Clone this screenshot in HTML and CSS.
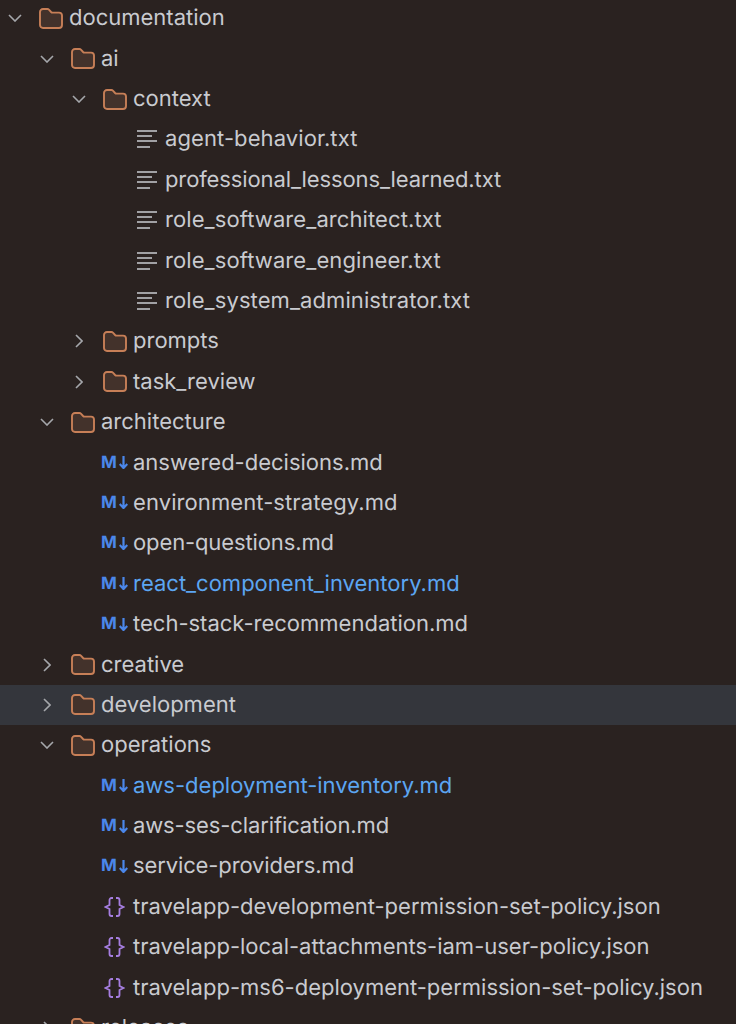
FILE: index.html
```html
<!DOCTYPE html>
<html lang="en">
<head>
  <meta charset="UTF-8">
  <title>Project tree</title>
  <link rel="stylesheet" href="styles.css">
</head>
<body>

<svg class="defs" width="0" height="0">
  <symbol id="i-open" viewBox="0 0 14 8"><path d="M1 1l6 6 6-6" fill="none" stroke="currentColor" stroke-width="1.6"/></symbol>
  <symbol id="i-closed" viewBox="0 0 8 14"><path d="M1 1l6 6-6 6" fill="none" stroke="currentColor" stroke-width="1.6"/></symbol>
  <symbol id="i-folder" viewBox="0 0 24 21"><path d="M1 4a3 3 0 0 1 3-3h4.500a2 2 0 0 1 1.400.6l2.200 2.400a2 2 0 0 0 1.400.6H20a3 3 0 0 1 3 3V17a3 3 0 0 1-3 3H4a3 3 0 0 1-3-3z" fill="#43322b" stroke="#c77f57" stroke-width="1.900"/></symbol>
  <symbol id="i-text" viewBox="0 0 21 18"><path d="M1 1h20M1 6h15M1 11h20M1 17h13" fill="none" stroke="#c9cbd0" stroke-width="1.500"/></symbol>
  <symbol id="i-json" viewBox="0 0 21 20"><path d="M9 1H7.500a2 2 0 0 0-2 2v5l-4 2 4 2v5a2 2 0 0 0 2 2H9M12 1h1.500a2 2 0 0 1 2 2v5l4 2-4 2v5a2 2 0 0 1-2 2H12" fill="none" stroke="#a67ee0" stroke-width="1.800"/></symbol>
  <symbol id="i-down" viewBox="0 0 9 13"><path d="M4.500 0v12M.7 8l3.800 4 3.800-4" fill="none" stroke="#4b87ea" stroke-width="2.200"/></symbol>
</svg>

<div class="tree">
  <div class="row lvl-0"><span class="arrow"><svg class="open"><use href="#i-open"/></svg></span><span class="icon"><svg class="folder"><use href="#i-folder"/></svg></span><span class="name">documentation</span></div>
  <div class="row lvl-1"><span class="arrow"><svg class="open"><use href="#i-open"/></svg></span><span class="icon"><svg class="folder"><use href="#i-folder"/></svg></span><span class="name">ai</span></div>
  <div class="row lvl-2"><span class="arrow"><svg class="open"><use href="#i-open"/></svg></span><span class="icon"><svg class="folder"><use href="#i-folder"/></svg></span><span class="name">context</span></div>
  <div class="row lvl-3"><span class="arrow"></span><span class="icon"><svg class="txt"><use href="#i-text"/></svg></span><span class="name loose">agent-behavior.txt</span></div>
  <div class="row lvl-3"><span class="arrow"></span><span class="icon"><svg class="txt"><use href="#i-text"/></svg></span><span class="name tight">professional_lessons_learned.txt</span></div>
  <div class="row lvl-3"><span class="arrow"></span><span class="icon"><svg class="txt"><use href="#i-text"/></svg></span><span class="name loose">role_software_architect.txt</span></div>
  <div class="row lvl-3"><span class="arrow"></span><span class="icon"><svg class="txt"><use href="#i-text"/></svg></span><span class="name loose">role_software_engineer.txt</span></div>
  <div class="row lvl-3"><span class="arrow"></span><span class="icon"><svg class="txt"><use href="#i-text"/></svg></span><span class="name loose">role_system_administrator.txt</span></div>
  <div class="row lvl-2"><span class="arrow"><svg class="closed"><use href="#i-closed"/></svg></span><span class="icon"><svg class="folder"><use href="#i-folder"/></svg></span><span class="name">prompts</span></div>
  <div class="row lvl-2"><span class="arrow"><svg class="closed"><use href="#i-closed"/></svg></span><span class="icon"><svg class="folder"><use href="#i-folder"/></svg></span><span class="name">task_review</span></div>
  <div class="row lvl-1"><span class="arrow"><svg class="open"><use href="#i-open"/></svg></span><span class="icon"><svg class="folder"><use href="#i-folder"/></svg></span><span class="name">architecture</span></div>
  <div class="row lvl-2"><span class="arrow"></span><span class="icon"><span class="md">M<svg class="down"><use href="#i-down"/></svg></span></span><span class="name">answered-decisions.md</span></div>
  <div class="row lvl-2"><span class="arrow"></span><span class="icon"><span class="md">M<svg class="down"><use href="#i-down"/></svg></span></span><span class="name loose">environment-strategy.md</span></div>
  <div class="row lvl-2"><span class="arrow"></span><span class="icon"><span class="md">M<svg class="down"><use href="#i-down"/></svg></span></span><span class="name tight">open-questions.md</span></div>
  <div class="row lvl-2 changed"><span class="arrow"></span><span class="icon"><span class="md">M<svg class="down"><use href="#i-down"/></svg></span></span><span class="name">react_component_inventory.md</span></div>
  <div class="row lvl-2"><span class="arrow"></span><span class="icon"><span class="md">M<svg class="down"><use href="#i-down"/></svg></span></span><span class="name">tech-stack-recommendation.md</span></div>
  <div class="row lvl-1"><span class="arrow"><svg class="closed"><use href="#i-closed"/></svg></span><span class="icon"><svg class="folder"><use href="#i-folder"/></svg></span><span class="name">creative</span></div>
  <div class="row lvl-1 selected"><span class="arrow"><svg class="closed"><use href="#i-closed"/></svg></span><span class="icon"><svg class="folder"><use href="#i-folder"/></svg></span><span class="name">development</span></div>
  <div class="row lvl-1"><span class="arrow"><svg class="open"><use href="#i-open"/></svg></span><span class="icon"><svg class="folder"><use href="#i-folder"/></svg></span><span class="name">operations</span></div>
  <div class="row lvl-2 changed"><span class="arrow"></span><span class="icon"><span class="md">M<svg class="down"><use href="#i-down"/></svg></span></span><span class="name">aws-deployment-inventory.md</span></div>
  <div class="row lvl-2"><span class="arrow"></span><span class="icon"><span class="md">M<svg class="down"><use href="#i-down"/></svg></span></span><span class="name tight">aws-ses-clarification.md</span></div>
  <div class="row lvl-2"><span class="arrow"></span><span class="icon"><span class="md">M<svg class="down"><use href="#i-down"/></svg></span></span><span class="name tight">service-providers.md</span></div>
  <div class="row lvl-2"><span class="arrow"></span><span class="icon"><svg class="json"><use href="#i-json"/></svg></span><span class="name">travelapp-development-permission-set-policy.json</span></div>
  <div class="row lvl-2"><span class="arrow"></span><span class="icon"><svg class="json"><use href="#i-json"/></svg></span><span class="name">travelapp-local-attachments-iam-user-policy.json</span></div>
  <div class="row lvl-2"><span class="arrow"></span><span class="icon"><svg class="json"><use href="#i-json"/></svg></span><span class="name">travelapp-ms6-deployment-permission-set-policy.json</span></div>
  <div class="row lvl-1"><span class="arrow"><svg class="closed"><use href="#i-closed"/></svg></span><span class="icon"><svg class="folder"><use href="#i-folder"/></svg></span><span class="name">releases</span></div>
</div>

</body>
</html>
```

FILE: styles.css
```css
* { box-sizing: border-box; }
html, body { height: 100%; overflow: hidden; }
body { margin: 0; background: #2a2220; color: #c9cbd0; font-family: Inter, "Noto Sans", sans-serif; font-size: 22px; text-rendering: geometricPrecision; }
.defs { display: block; height: 0; }

.tree { margin-top: -1.95px; }
.row { display: flex; align-items: center; height: 40.4px; white-space: nowrap; }
.lvl-0 { padding-left: 7px; }
.lvl-1 { padding-left: 39px; }
.lvl-2 { padding-left: 71px; }
.lvl-3 { padding-left: 103px; }

.selected { background: #34363c; }
.changed .name { color: #5ca6f2; }

/* system Inter runs a bit wider or narrower than the IDE's on some names */
.tight { letter-spacing: -0.12px; }
.loose { letter-spacing: 0.09px; }

.arrow { flex: none; display: flex; align-items: center; width: 32px; color: #a5a7ab; }
.icon { flex: none; display: flex; align-items: center; width: 30px; }
.open { width: 14px; height: 8px; margin-left: 1px; }
.closed { width: 8px; height: 14px; margin-left: 4px; }
.folder { width: 24px; height: 21px; }
.txt { width: 21px; height: 18px; margin-left: 1px; }
.json { width: 21px; height: 20px; margin-left: 1px; }
.md { display: flex; align-items: center; gap: 2px; margin-left: -2px; color: #4b87ea; font-size: 17px; font-weight: 700; }
.down { width: 9px; height: 13px; }
```
